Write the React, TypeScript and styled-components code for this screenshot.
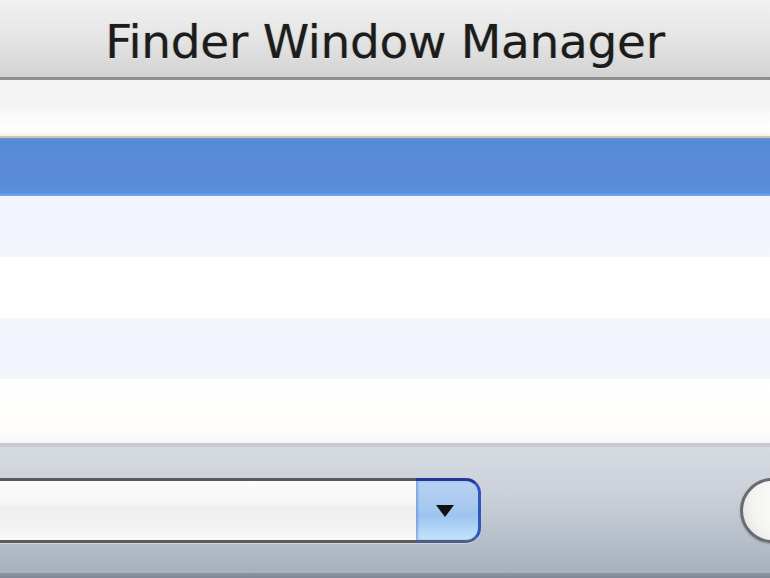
import React from "react";
import styled, { createGlobalStyle } from "styled-components";

const Global = createGlobalStyle`
  html, body { margin: 0; padding: 0; background: #ffffff; }
  #root { width: 770px; height: 578px; overflow: hidden; }
`;

const Window = styled.div`
  display: flex;
  flex-direction: column;
  width: 770px;
  height: 578px;
  overflow: hidden;
  font-family: "DejaVu Sans", "Liberation Sans", sans-serif;
`;

const TitleBar = styled.div`
  flex: none;
  height: 80px;
  box-sizing: border-box;
  display: flex;
  align-items: center;
  justify-content: center;
  background: linear-gradient(to bottom, #f1f1f1 0%, #e6e6e6 45%, #d3d3d3 100%);
  border-bottom: 3px solid #8f8f8f;
`;

const Title = styled.h1`
  margin: 0;
  padding-top: 6px;
  font-family: "DejaVu Sans", "Liberation Sans", sans-serif;
  font-weight: normal;
  font-size: 47px;
  letter-spacing: -0.3px;
  color: #1c1c1c;
  text-shadow: 0 1px 0 rgba(255, 255, 255, 0.6), 0 0 1px rgba(40, 30, 20, 0.6);
`;

const HeaderRow = styled.div`
  flex: none;
  height: 58px;
  box-sizing: border-box;
  background: linear-gradient(to bottom, #f4f4f4 0%, #f3f3f3 45%, #fafafa 60%, #ffffff 92%, #f5f1ec 100%);
  border-bottom: 2px solid #cdc5bc;
`;

const Row = styled.div<{ $variant: "selected" | "alt" | "plain" }>`
  flex: none;
  height: ${(p) => (p.$variant === "selected" ? "58px" : "61px")};
  box-sizing: border-box;
  background: ${(p) =>
    p.$variant === "selected"
      ? "linear-gradient(to bottom, #6a8fc8 0%, #528ad6 6%, #5b8bd8 40%, #5a8bd8 80%, #5a8ee0 94%, #7ea6e8 100%)"
      : p.$variant === "alt"
      ? "linear-gradient(to bottom, #f5f6fb 0%, #f2f5fd 15%, #f2f5fd 85%, #f6f7fb 100%)"
      : "#ffffff"};
`;

const Filler = styled.div`
  flex: 1;
  background: linear-gradient(to bottom, #ffffff 0%, #fefdfb 85%, #f2f5fb 100%);
`;

const BottomBar = styled.div`
  flex: none;
  height: 135px;
  box-sizing: border-box;
  border-top: 4px solid #c9c8cc;
  background: linear-gradient(to bottom, #d7dbe2 0%, #c9cfd8 40%, #aeb7c4 85%, #a4adba 100%);
  display: flex;
  align-items: flex-start;
  justify-content: space-between;
  padding-top: 31px;
  position: relative;
`;

const BottomEdge = styled.div`
  position: absolute;
  left: 0;
  right: 0;
  bottom: 0;
  height: 5px;
  background: linear-gradient(to bottom, #8c95a2, #7f8896);
`;

const Combo = styled.div`
  display: flex;
  margin-left: -30px;
  height: 65px;
  filter: drop-shadow(0 1px 0 rgba(255, 255, 255, 0.35));
`;

const ComboField = styled.div`
  width: 446px;
  box-sizing: border-box;
  border-top: 3px solid #5a5a5e;
  border-bottom: 3px solid #5c5c60;
  background: linear-gradient(to bottom, #fbfbfb 0%, #f7f7f7 35%, #eeeeee 45%, #f2f2f2 80%, #fbfbfb 100%);
`;

const ComboButton = styled.div`
  width: 65px;
  box-sizing: border-box;
  border-top: 3px solid #23399a;
  border-right: 3px solid #2f55c0;
  border-bottom: 3px solid #4d5f86;
  border-radius: 0 15px 15px 0;
  background: linear-gradient(to bottom, #b8d2f2 0%, #a9c9ef 40%, #9cc5f0 60%, #c5e4fc 100%);
  box-shadow: inset 2px 0 2px rgba(80, 130, 210, 0.5);
  display: flex;
  align-items: center;
  justify-content: center;
`;

const Arrow = styled.svg`
  width: 20px;
  height: 14px;
  margin-right: 4px;
  margin-top: 1px;
`;

const RoundButton = styled.div`
  width: 80px;
  height: 65px;
  margin-right: -50px;
  box-sizing: border-box;
  border-radius: 33px;
  border: 3px solid #6b6b6e;
  background: radial-gradient(circle at 60% 40%, #ffffff 0%, #f4f4f2 60%, #dcdcdc 100%);
  box-shadow: 0 1px 2px rgba(0, 0, 0, 0.25);
`;

export default function App() {
  return (
    <>
      <Global />
      <Window>
        <TitleBar>
          <Title>Finder Window Manager</Title>
        </TitleBar>
        <HeaderRow />
        <Row $variant="selected" />
        <Row $variant="alt" />
        <Row $variant="plain" />
        <Row $variant="alt" />
        <Filler />
        <BottomBar>
          <Combo>
            <ComboField />
            <ComboButton>
              <Arrow viewBox="0 0 20 14">
                <path d="M1 1 H19 L10 13 Z" fill="#111" />
              </Arrow>
            </ComboButton>
          </Combo>
          <RoundButton />
          <BottomEdge />
        </BottomBar>
      </Window>
    </>
  );
}
